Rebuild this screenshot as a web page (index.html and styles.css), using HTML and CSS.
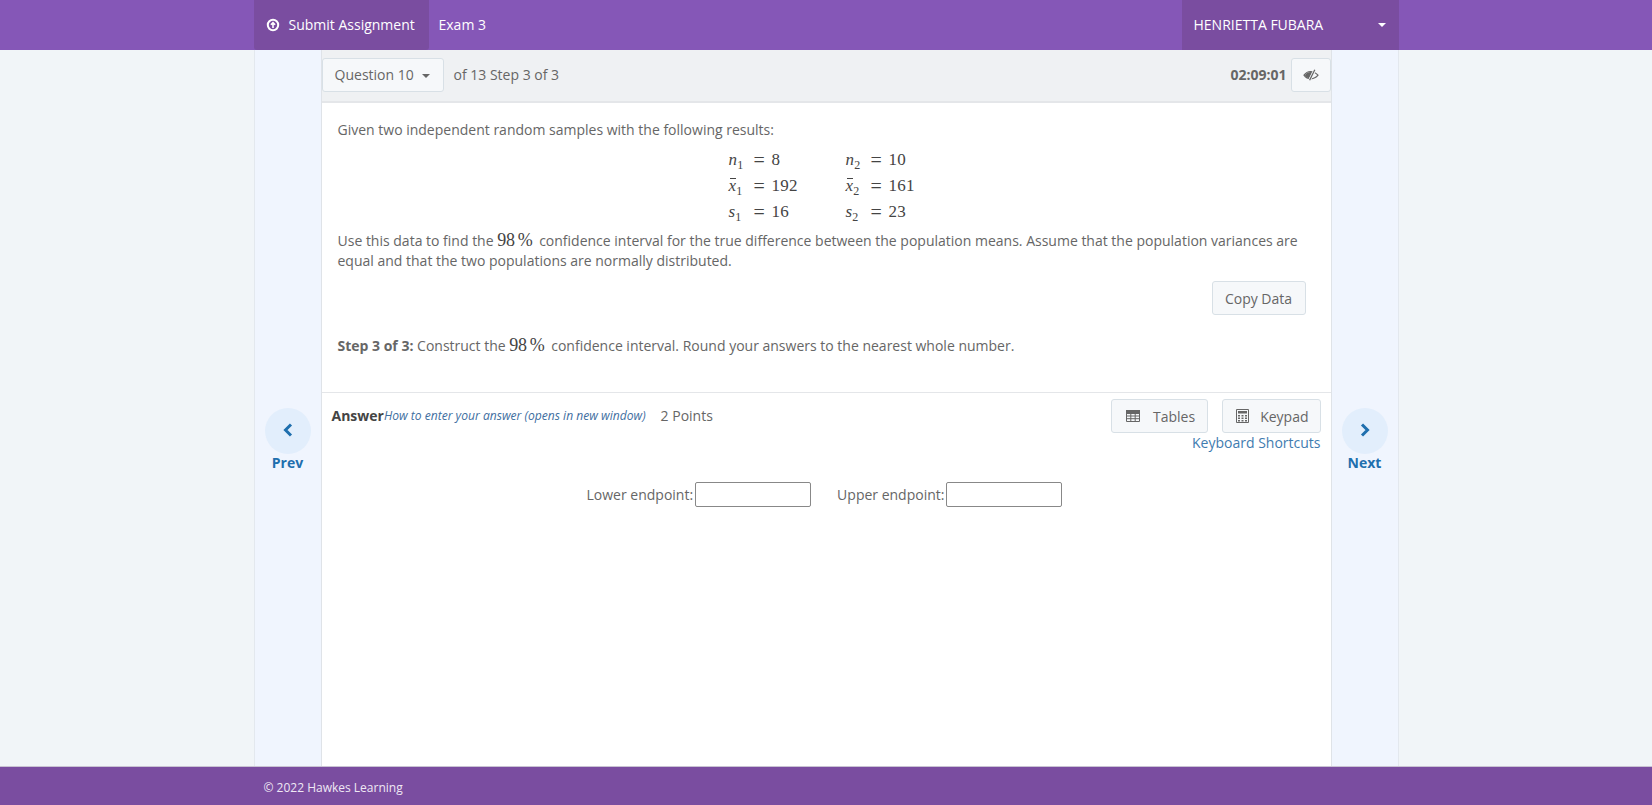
FILE: index.html
```html
<!DOCTYPE html>
<html lang="en">
<head>
  <meta charset="UTF-8">
  <title>Exam 3</title>
  <link rel="stylesheet" href="styles.css">
</head>
<body>
  <header class="topbar">
    <div class="wrap topbar-inner">
      <a class="submit-btn">
        <svg class="submit-icon" viewBox="0 0 14 14"><circle cx="7" cy="7" r="5.2" fill="none" stroke="#fff" stroke-width="2"/><path d="M7 10V4.6M4.9 6.8 7 4.6l2.1 2.2" fill="none" stroke="#fff" stroke-width="1.6"/></svg>
        Submit Assignment
      </a>
      <span class="exam-name">Exam 3</span>
      <div class="user-menu">
        <span>HENRIETTA FUBARA</span>
        <span class="caret caret-white"></span>
      </div>
    </div>
  </header>

  <div class="wrap page">
    <div class="side side-left">
      <a class="nav-link">
        <span class="nav-circle">
          <svg width="12" height="16" viewBox="0 0 12 16"><path d="M9 2.500 3.500 8 9 13.500" fill="none" stroke="#1f6fae" stroke-width="3"/></svg>
        </span>
        Prev
      </a>
    </div>

    <main class="main">
      <div class="toolbar">
        <button class="btn question-btn">Question 10 <span class="caret"></span></button>
        <span class="step-text">of 13 Step 3 of 3</span>
        <span class="timer">02:09:01</span>
        <button class="btn eye-btn">
          <svg width="16" height="12" viewBox="0 0 16 12"><path d="M1 6.200c1.800-2.500 4-3.700 6.600-3.700 2.700 0 5.100 1.200 7.400 3.700-1.900 2.400-4.300 3.600-7.200 3.600S2.700 8.600 1 6.200Z" fill="none" stroke="#666" stroke-width="1.200"/><path d="M1.800 6.200C3.300 4.100 5.300 3 7.600 3L9.400 3.300 6.300 9.300C4.500 9 3 7.900 1.800 6.200Z" fill="#666"/><path d="M11.800.800 6.600 11.200" stroke="#f6f8fa" stroke-width="2.800"/><path d="M11.800.800 6.600 11.200" stroke="#666" stroke-width="1.300"/></svg>
        </button>
      </div>

      <section class="question">
        <p class="line">Given two independent random samples with the following results:</p>
        <div class="math-table">
          <span class="m"><i>n</i><sub>1</sub></span><span class="eq">=</span><span class="m">8</span>
          <span class="m"><i>n</i><sub>2</sub></span><span class="eq">=</span><span class="m">10</span>
          <span class="m"><i class="bar">x</i><sub>1</sub></span><span class="eq">=</span><span class="m">192</span>
          <span class="m"><i class="bar">x</i><sub>2</sub></span><span class="eq">=</span><span class="m">161</span>
          <span class="m"><i>s</i><sub>1</sub></span><span class="eq">=</span><span class="m">16</span>
          <span class="m"><i>s</i><sub>2</sub></span><span class="eq">=</span><span class="m">23</span>
        </div>
        <p class="para">Use this data to find the <span class="pct">98 %</span> confidence interval for the true difference between the population means. Assume that the population variances are equal and that the two populations are normally distributed.</p>
        <div class="copy-row"><button class="btn">Copy Data</button></div>
        <p class="step-line"><b>Step 3 of 3:</b> Construct the <span class="pct">98 %</span> confidence interval. Round your answers to the nearest whole number.</p>
      </section>

      <section class="answer">
        <div class="answer-head">
          <b class="answer-title">Answer</b><a class="how-to">How to enter your answer (opens in new window)</a>
          <span class="points">2 Points</span>
          <div class="answer-tools">
            <div class="tool-btns">
              <button class="btn tool-btn">
                <svg width="14" height="12" viewBox="0 0 14 12"><path d="M.5.500h13v11H.5zM.5 3.500h13M.5 6h13M.5 8.700h13M4.800 3.500v8M9.200 3.500v8" fill="none" stroke="#666" stroke-width="1"/><path d="M0 0h14v3.500H0z" fill="#666"/></svg>
                Tables
              </button>
              <button class="btn tool-btn keypad-btn">
                <svg width="13" height="14" viewBox="0 0 13 14"><path d="M.5.500h12v13H.5z" fill="none" stroke="#666"/><path d="M2 2h9v2.500H2z" fill="#666"/><path d="M2 6h2v1.500H2zM5.500 6h2v1.500h-2zM9 6h2v1.500H9zM2 8.500h2V10H2zM5.500 8.500h2V10h-2zM9 8.500h2V10H9zM2 11h2v1.500H2zM5.500 11h2v1.500h-2zM9 11h2v1.500H9z" fill="#666"/></svg>
                Keypad
              </button>
            </div>
            <a class="shortcuts">Keyboard Shortcuts</a>
          </div>
        </div>
        <div class="endpoints">
          <label class="endpoint">Lower endpoint:<input type="text"></label>
          <label class="endpoint">Upper endpoint:<input type="text"></label>
        </div>
      </section>
    </main>

    <div class="side side-right">
      <a class="nav-link">
        <span class="nav-circle">
          <svg width="12" height="16" viewBox="0 0 12 16"><path d="M3 2.500 8.500 8 3 13.500" fill="none" stroke="#1f6fae" stroke-width="3"/></svg>
        </span>
        Next
      </a>
    </div>
  </div>

  <footer class="footer">
    <div class="wrap footer-inner">© 2022 Hawkes Learning</div>
  </footer>
</body>
</html>
```

FILE: styles.css
```css
* {
  box-sizing: border-box;
}
html, body {
  height: 100%;
}
body {
  margin: 0;
  display: flex;
  flex-direction: column;
  background-color: #f1f5f8;
  color: #666;
  font-family: "Open Sans", sans-serif;
  font-size: 14px;
  line-height: 20px;
  overflow: hidden;
}
.wrap {
  width: 1145px;
  margin: 0 auto;
}
a {
  cursor: pointer;
}

/* top bar */
.topbar {
  height: 50px;
  flex: none;
  background-color: #8557b7;
  color: #fff;
}
.topbar-inner {
  display: flex;
  align-items: center;
  height: 100%;
}
.submit-btn {
  display: flex;
  align-items: center;
  gap: 9px;
  width: 175px;
  height: 100%;
  padding-left: 12px;
  background-color: #7a4da0;
  border-radius: 0 0 3px 3px;
}
.submit-icon {
  width: 14px;
  height: 14px;
}
.exam-name {
  margin-left: 10px;
}
.user-menu {
  margin-left: auto;
  display: flex;
  align-items: center;
  justify-content: space-between;
  width: 217px;
  height: 100%;
  padding: 0 13px 0 12px;
  background-color: #7a4da0;
}
.caret {
  display: inline-block;
  width: 0;
  height: 0;
  margin-left: 5px;
  vertical-align: 2px;
  border-top: 4px solid #666;
  border-left: 4px solid transparent;
  border-right: 4px solid transparent;
}
.caret-white {
  border-top-color: #fff;
}

/* columns */
.page {
  flex: 1;
  min-height: 0;
  display: flex;
  background-color: #f0f5fe;
  border-left: 1px solid #e3e8ee;
  border-right: 1px solid #e3e8ee;
}
.side {
  flex: none;
  padding-top: 358px;
}
.side-left {
  width: 66px;
}
.side-right {
  width: 66px;
}
.nav-link {
  display: flex;
  flex-direction: column;
  align-items: center;
  color: #1f6fae;
  font-weight: 700;
  line-height: 18px;
}
.nav-circle {
  display: flex;
  align-items: center;
  justify-content: center;
  width: 46px;
  height: 46px;
  padding-bottom: 3px;
  border-radius: 50%;
  background-color: #e2eefc;
}
.main {
  flex: 1;
  display: flex;
  flex-direction: column;
  background-color: #fff;
  border-left: 1px solid #dfe3e8;
  border-right: 1px solid #dfe3e8;
}

/* toolbar */
.toolbar {
  display: flex;
  align-items: center;
  height: 53px;
  flex: none;
  padding: 1px 0 2px 0;
  background-color: #eff1f3;
  border-bottom: 2px solid #e4e6e9;
}
.btn {
  height: 34px;
  padding: 0 12px;
  background-color: #f6f8fa;
  border: 1px solid #d8e0e6;
  border-radius: 3px;
  color: #666;
  font-family: inherit;
  font-size: 14px;
}
.question-btn {
  width: 122px;
  padding: 0 0 2px;
}
.step-text {
  margin-left: 10px;
}
.timer {
  margin-left: auto;
  margin-right: 4px;
  font-weight: 700;
}
.eye-btn {
  display: flex;
  align-items: center;
  justify-content: center;
  width: 40px;
  padding: 0;
}

/* question */
.question {
  padding: 17px 25px 0 16px;
  height: 290px;
  flex: none;
  border-bottom: 1px solid #e4e6e9;
}
.question p {
  margin: 0;
}
.math-table {
  display: grid;
  grid-template-columns: 25px 18px 74px 25px 18px auto;
  grid-auto-rows: 26px;
  align-items: center;
  margin: 7px 0 6px 391px;
  color: #444;
  font-family: "Liberation Serif", serif;
  font-size: 17px;
  letter-spacing: 0.2px;
}
.m sub {
  font-size: 12px;
  line-height: 0;
}
.eq {
  font-size: 20px;
}
.bar {
  position: relative;
}
.bar::before {
  content: "";
  position: absolute;
  left: 1px;
  right: 0;
  top: 2px;
  border-top: 1px solid #444;
}
.pct {
  margin: 0 3px 0 0;
  color: #444;
  font-family: "Liberation Serif", serif;
  font-size: 18px;
  line-height: 0;
  letter-spacing: -0.3px;
  word-spacing: -1px;
}
.copy-row {
  display: flex;
  justify-content: flex-end;
  margin-top: 10px;
}
.copy-row .btn {
  width: 94px;
  padding: 0;
}
.question .step-line {
  margin-top: 21px;
}

/* answer */
.answer {
  flex: 1;
  padding: 6px 10px 0 10px;
}
.answer-head {
  display: flex;
  align-items: flex-start;
}
.answer-title {
  margin-top: 7px;
  color: #444;
}
.how-to {
  margin-top: 7px;
  color: #3f6f9f;
  font-size: 12.1px;
  font-style: italic;
}
.points {
  margin: 7px 0 0 15px;
}
.answer-tools {
  margin-left: auto;
  display: flex;
  flex-direction: column;
  align-items: flex-end;
}
.tool-btns {
  display: flex;
  gap: 14px;
}
.tool-btn {
  display: flex;
  align-items: center;
  gap: 13px;
  padding: 0 12px 0 14px;
}
.keypad-btn {
  gap: 11px;
  padding: 0 11px 0 13px;
}
.shortcuts {
  color: #3f7cb0;
}
.endpoints {
  display: flex;
  justify-content: center;
  gap: 26px;
  margin-top: 29px;
  padding-right: 3px;
}
.endpoint {
  display: flex;
  align-items: center;
  gap: 2px;
}
.endpoint input {
  width: 116px;
  height: 25px;
  border: 1px solid #888;
  border-radius: 2px;
  background-color: #fff;
}

/* footer */
.footer {
  height: 39px;
  flex: none;
  background-color: #7a4da0;
  border-top: 1px solid #c9c3d3;
  color: #efe8f4;
  font-size: 12px;
}
.footer-inner {
  padding: 11px 10px 0;
}
```
